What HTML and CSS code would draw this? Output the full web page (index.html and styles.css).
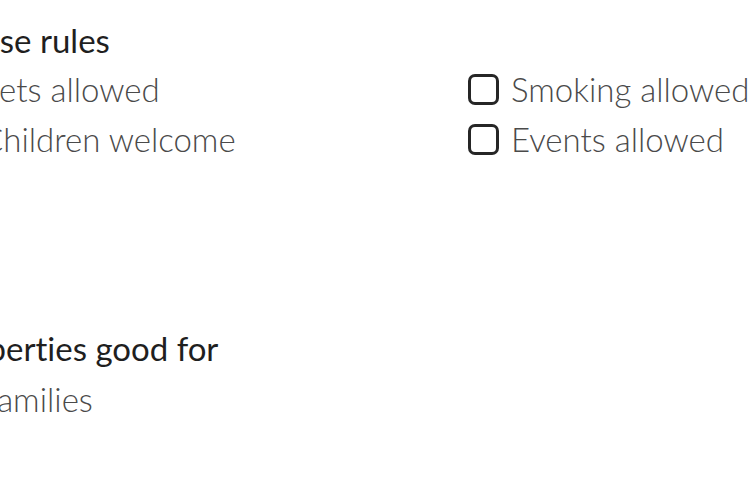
FILE: index.html
```html
<!DOCTYPE html>
<html lang="en">
<head>
    <meta charset="UTF-8">
    <meta name="viewport" content="width=device-width, initial-scale=1.0">
    <title>Filters</title>
    <link rel="stylesheet" href="styles.css">
</head>
<body>
    <div class="filters">
        <section class="group">
            <h2>House rules</h2>
            <div class="options">
                <label class="option"><span class="box"></span>Pets allowed</label>
                <label class="option"><span class="box"></span>Smoking allowed</label>
                <label class="option"><span class="box"></span>Children welcome</label>
                <label class="option"><span class="box"></span>Events allowed</label>
            </div>
        </section>
        <section class="group group-good">
            <h2>Properties good for</h2>
            <div class="options">
                <label class="option"><span class="box"></span>Families</label>
            </div>
        </section>
    </div>
</body>
</html>
```

FILE: styles.css
```css
body {
    margin: 0;
    background-color: #fff;
    font-family: 'Lato', 'Open Sans', sans-serif;
    font-variant-ligatures: none;
    overflow: hidden;
}
.filters {
    margin-left: -62px;
    width: 1100px;
    padding-top: 20px;
}
.group h2 {
    margin: 0 0 4px 0;
    font-size: 33px;
    line-height: 40px;
    font-weight: 400;
    color: #1f1f1f;
}
.group-good {
    margin-top: 164px;
}
.group-good h2 {
    margin-bottom: 6px;
}
.options {
    display: grid;
    grid-template-columns: 530px 530px;
}
.option {
    display: flex;
    align-items: center;
    gap: 12px;
    height: 50px;
    font-size: 33px;
    font-weight: 300;
    color: #4a4a4a;
    white-space: nowrap;
}
.box {
    flex: none;
    width: 31px;
    height: 31px;
    box-sizing: border-box;
    border: 3px solid #262626;
    border-radius: 7px;
}
```
